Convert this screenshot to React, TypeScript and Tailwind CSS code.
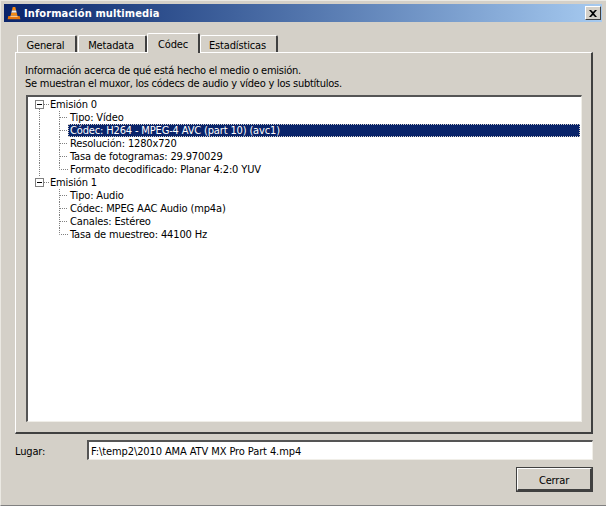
import React from 'react'

const font = "font-['DejaVu_Sans_Condensed','DejaVu_Sans',sans-serif]"

function VlcCone() {
  return (
    <svg width="14" height="14" viewBox="0 0 16 16" className="shrink-0">
      <path d="M6.6 1h2.8l1 4H5.6z" fill="#f58a12" />
      <path d="M5.6 5h4.8l.7 2.8H4.9z" fill="#f4f0e8" />
      <path d="M4.9 7.8h6.2l.8 3.4H4.1z" fill="#f58a12" />
      <path d="M1.5 11.5h13l.8 3.5H.7z" fill="#e8770c" />
      <path d="M4.1 11.2h7.8l.4 1.2H3.7z" fill="#fbe3c0" />
    </svg>
  )
}

function Parent({ text, last }: { text: string; last?: boolean }) {
  return (
    <div className="flex h-[13px] items-center">
      <svg width="14" height="13" className="shrink-0">
        {!last && <path d="M4.5 11V13" stroke="#808080" strokeDasharray="1 1" fill="none" />}
        <path d="M9 6.5H14" stroke="#808080" strokeDasharray="1 1" fill="none" />
        <rect x="0.5" y="2.5" width="8" height="8" fill="#fff" stroke="#808080" />
        <path d="M2 6.5H7" stroke="#000" fill="none" />
      </svg>
      <span className="pl-[1px] whitespace-nowrap">{text}</span>
    </div>
  )
}

function Child({ text, last, selected, open }: { text: string; last?: boolean; selected?: boolean; open?: boolean }) {
  return (
    <div className="flex h-[13px] items-center">
      <div className="w-[20px] shrink-0 h-full relative">
        {open && <div className="absolute left-[4px] top-0 bottom-0 border-l border-dotted border-[#808080]" />}
      </div>
      <svg width="13" height="13" className="shrink-0">
        <path d={last ? 'M4.5 0V6.5H13' : 'M4.5 0V13M5 6.5H13'} stroke="#808080" strokeDasharray="1 1" fill="none" />
      </svg>
      <span
        className={
          selected
            ? 'flex-1 h-full pl-[1px] bg-[#0a246a] text-white border border-dotted border-[#d4d0c8] leading-[11px] whitespace-nowrap'
            : 'pl-[2px] whitespace-nowrap'
        }
      >
        {text}
      </span>
    </div>
  )
}

function Tab({ label, active, width }: { label: string; active?: boolean; width: string }) {
  return (
    <div
      className={
        active
          ? `${width} h-[20px] -mb-[1px] z-10 pt-[2px] flex items-center justify-center bg-[#d4d0c8] border-l border-t border-white border-r-2 border-r-[#404040] rounded-t-[2px]`
          : `${width} h-[17px] mt-[2px] pt-[2px] pr-[2px] flex items-center justify-center border-l border-t border-white border-r-2 border-r-[#404040] rounded-t-[2px]`
      }
    >
      {label}
    </div>
  )
}

export default function App() {
  return (
    <div className={`${font} w-[606px] h-[506px] flex flex-col bg-[#d4d0c8] text-[11px] leading-[13px] tracking-[-0.15px] text-black border-b border-b-[#808080] border-t border-l border-t-[#ebe9e3] border-l-[#ebe9e3] pt-[3px]`}>
      {/* Title bar */}
      <div className="ml-[3px] mr-[4px] h-[18px] flex items-center pl-[3px] pr-[1px] bg-gradient-to-r from-[#0a246a] to-[#a6caf0]">
        <VlcCone />
        <span className="ml-[3px] font-bold text-white text-[11px] tracking-[0.1px]">Información multimedia</span>
        <button className="ml-auto w-[16px] h-[14px] flex items-center justify-center bg-[#d4d0c8] border border-t-white border-l-white border-r-[#404040] border-b-[#404040]">
          <svg width="8" height="7" viewBox="0 0 8 7">
            <path d="M0 0h2l2 2 2-2h2L5 3.5 8 7H6L4 5 2 7H0l3-3.5z" fill="#000" />
          </svg>
        </button>
      </div>

      {/* Tabs */}
      <div className="flex mt-[11px] pl-[16px] h-[22px] items-start">
        <Tab label="General" width="w-[60px]" />
        <div className="w-[1px]" />
        <Tab label="Metadata" width="w-[69px]" />
        <Tab label="Códec" active width="w-[53px]" />
        <Tab label="Estadísticas" width="w-[78px]" />
      </div>

      {/* Pane */}
      <div className="ml-[14px] mr-[13px] h-[382px] -mt-[3px] flex flex-col border-l border-t border-white border-r-2 border-b-2 border-r-[#404040] border-b-[#404040] pl-[9px] pr-[9px] pt-[11px] pb-[10px]">
        <p className="tracking-[-0.25px]">Información acerca de qué está hecho el medio o emisión.</p>
        <p className="tracking-[-0.25px]">Se muestran el muxor, los códecs de audio y vídeo y los subtítulos.</p>
        <div className="mt-[5px] ml-[1px] flex-1 bg-white border-t-2 border-l-2 border-t-[#555] border-l-[#555] border-r border-b border-r-[#f0eee8] border-b-[#f0eee8] pl-[7px] pr-[1px] pt-[1px]">
          <Parent text="Emisión 0" />
          <Child text="Tipo: Vídeo" open />
          <Child text="Códec: H264 - MPEG-4 AVC (part 10) (avc1)" open selected />
          <Child text="Resolución: 1280x720" open />
          <Child text="Tasa de fotogramas: 29.970029" open />
          <Child text="Formato decodificado: Planar 4:2:0 YUV" open last />
          <Parent text="Emisión 1" last />
          <Child text="Tipo: Audio" />
          <Child text="Códec: MPEG AAC Audio (mp4a)" />
          <Child text="Canales: Estéreo" />
          <Child text="Tasa de muestreo: 44100 Hz" last />
        </div>
      </div>

      {/* Location */}
      <div className="flex items-center mt-[6px] pl-[14px] pr-[13px]">
        <span className="w-[72px] pt-[2px]">Lugar:</span>
        <div className="flex-1 h-[20px] flex items-center pt-[2px] pl-[2px] tracking-[-0.1px] bg-white border-t-2 border-l-2 border-t-[#555] border-l-[#555] border-r border-b border-r-[#f0eee8] border-b-[#f0eee8]">
          F:\temp2\2010 AMA ATV MX Pro Part 4.mp4
        </div>
      </div>

      {/* Close */}
      <div className="flex justify-end mt-[8px] pr-[14px]">
        <button className="w-[75px] h-[23px] pt-[2px] flex items-center justify-center bg-[#d4d0c8] border border-t-white border-l-white border-r-2 border-b-2 border-r-[#404040] border-b-[#404040] outline outline-[#404040]">
          Cerrar
        </button>
      </div>
    </div>
  )
}
